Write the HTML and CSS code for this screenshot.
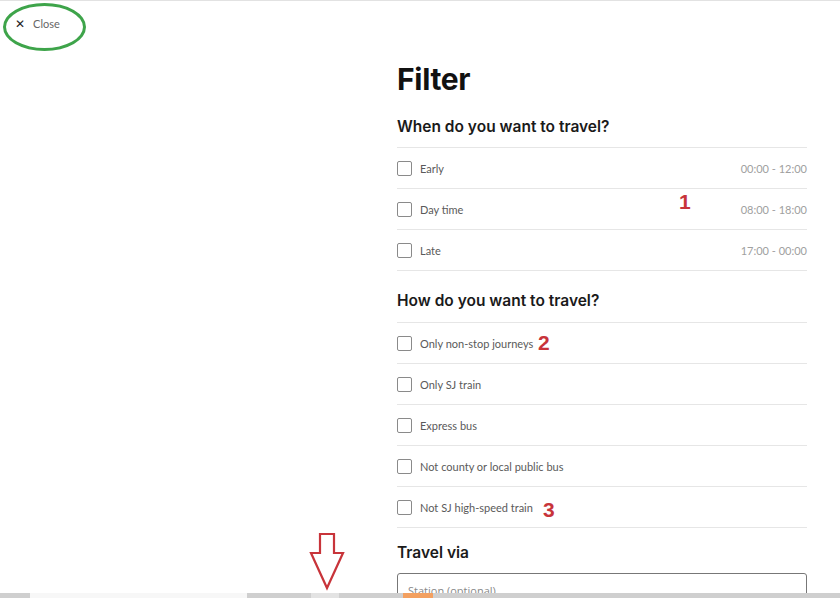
FILE: index.html
```html
<!DOCTYPE html>
<html>
<head>
<meta charset="utf-8">
<link rel="stylesheet" href="styles.css">
</head>
<body>
<header class="topbar">
  <button class="close"><span class="close-x">✕</span><span>Close</span></button>
</header>
<main class="panel">
  <h1 class="title">Filter</h1>
  <h2 class="section">When do you want to travel?</h2>
  <ul class="list">
    <li class="row"><span class="box"></span><span class="label">Early</span><span class="time">00:00 - 12:00</span></li>
    <li class="row"><span class="box"></span><span class="label">Day time</span><span class="time">08:00 - 18:00</span></li>
    <li class="row"><span class="box"></span><span class="label">Late</span><span class="time">17:00 - 00:00</span></li>
  </ul>
  <h2 class="section second">How do you want to travel?</h2>
  <ul class="list">
    <li class="row"><span class="box"></span><span class="label">Only non-stop journeys</span></li>
    <li class="row"><span class="box"></span><span class="label">Only SJ train</span></li>
    <li class="row"><span class="box"></span><span class="label">Express bus</span></li>
    <li class="row"><span class="box"></span><span class="label">Not county or local public bus</span></li>
    <li class="row"><span class="box"></span><span class="label">Not SJ high-speed train</span></li>
  </ul>
  <h2 class="section third">Travel via</h2>
  <div class="input">Station (optional)</div>
</main>

<div class="ring"></div>
<span class="num n1">1</span>
<span class="num n2">2</span>
<span class="num n3">3</span>
<svg class="arrow" width="36" height="60" viewBox="0 0 36 60">
  <path d="M11 2 H25 V21 H34 L18 56 L2 21 H11 Z" fill="none" stroke="#c8343a" stroke-width="2.2" stroke-linejoin="miter"/>
</svg>

<div class="taskbar">
  <span class="seg white"></span>
  <span class="seg light"></span>
  <span class="seg orange"></span>
</div>
</body>
</html>
```
FILE: styles.css
```css
html, body {
  margin: 0;
  padding: 0;
  background: #fff;
}
body {
  font-family: "Lato", "Open Sans", sans-serif;
  color: #222;
  border-top: 1px solid #e2e2e2;
  height: 597px;
  overflow: hidden;
  position: relative;
}
.topbar {
  height: 45px;
  display: flex;
  align-items: center;
  padding-left: 15px;
}
.close {
  display: flex;
  align-items: center;
  gap: 8px;
  border: 0;
  background: none;
  padding: 0;
  font-family: "Lato", sans-serif;
  font-size: 11px;
  color: #666;
}
.close-x {
  font-family: "DejaVu Sans", sans-serif;
  font-size: 12px;
  color: #222;
}
.panel {
  margin-left: 397px;
  width: 410px;
}
.title {
  margin: 15px 0 0;
  font-family: "Inter", "Liberation Sans", sans-serif;
  font-size: 30px;
  line-height: 36px;
  font-weight: 700;
  letter-spacing: -0.3px;
  color: #111;
}
.section {
  margin: 19px 0 9px;
  font-family: "Inter", "Liberation Sans", sans-serif;
  font-size: 15.5px;
  line-height: 22px;
  font-weight: 600;
  color: #1a1a1a;
}
.section.second {
  margin: 19px 0 10px;
}
.section.third {
  margin: 14px 0 9px;
}
.list {
  list-style: none;
  margin: 0;
  padding: 0;
  border-top: 1px solid #e6e6e6;
}
.row {
  height: 40px;
  border-bottom: 1px solid #e6e6e6;
  display: flex;
  align-items: center;
  font-size: 11px;
}
.box {
  width: 13px;
  height: 13px;
  border: 1px solid #8a8a8a;
  border-radius: 2px;
  margin-right: 8px;
  flex: none;
}
.label {
  color: #5a5a5a;
  flex: 1;
}
.time {
  color: #a0a0a0;
}
.input {
  border: 1px solid #777;
  border-radius: 3px;
  box-sizing: border-box;
  height: 40px;
  padding: 9px 10px;
  font-family: "Open Sans", sans-serif;
  font-size: 11px;
  color: #888;
}
.ring {
  position: absolute;
  left: 3px;
  top: 2px;
  width: 77px;
  height: 42px;
  border: 3px solid #3ea44a;
  border-radius: 50%;
}
.num {
  position: absolute;
  font-family: "Liberation Sans", sans-serif;
  font-weight: bold;
  font-size: 21px;
  color: #c8343a;
  line-height: 1;
}
.n1 { left: 679px; top: 190px; }
.n2 { left: 538px; top: 331px; }
.n3 { left: 543px; top: 498px; }
.arrow {
  position: absolute;
  left: 309px;
  top: 531px;
}
.taskbar {
  position: absolute;
  left: 0;
  right: 0;
  bottom: 0;
  height: 5px;
  background: #cfcfcf;
}
.seg {
  position: absolute;
  top: 0;
  height: 5px;
}
.seg.white { left: 30px; width: 217px; background: #f7f7f7; }
.seg.light { left: 311px; width: 28px; background: #e3e3e3; }
.seg.orange { left: 403px; width: 30px; background: #f3a060; }
```
